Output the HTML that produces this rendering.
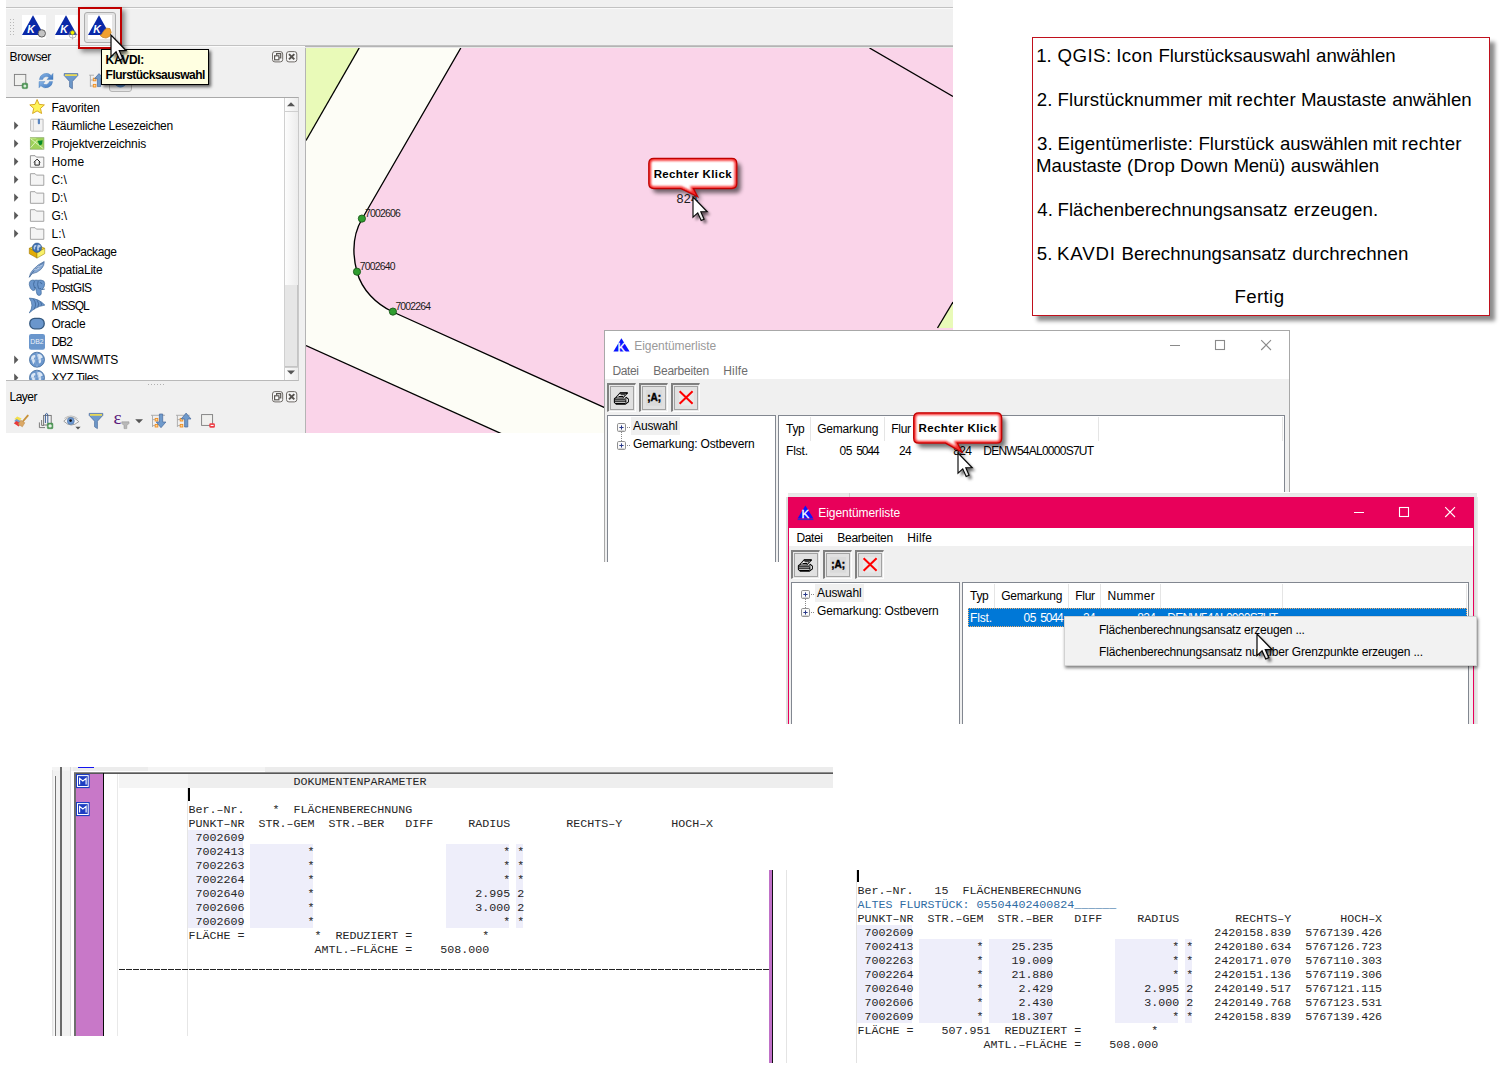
<!DOCTYPE html>
<html><head><meta charset="utf-8"><title>KAVDI</title><style>
html,body{margin:0;padding:0;background:#fff;}
body{width:1508px;height:1081px;position:relative;overflow:hidden;font-family:"Liberation Sans",sans-serif;}
.t{position:absolute;white-space:pre;display:block;}
.b{position:absolute;box-sizing:border-box;}
svg{position:absolute;overflow:visible;}
</style></head><body>
<svg style="left:0;top:0" width="0" height="0"><defs><filter id="blur09" x="-50%" y="-50%" width="200%" height="200%"><feGaussianBlur stdDeviation="0.9"/></filter><filter id="blur1" x="-50%" y="-50%" width="200%" height="200%"><feGaussianBlur stdDeviation="1.2"/></filter><filter id="blur2" x="-50%" y="-50%" width="200%" height="200%"><feGaussianBlur stdDeviation="2"/></filter><filter id="blur05" x="-50%" y="-50%" width="200%" height="200%"><feGaussianBlur stdDeviation="0.7"/></filter><filter id="blur3" x="-50%" y="-50%" width="200%" height="200%"><feGaussianBlur stdDeviation="3"/></filter><linearGradient id="cgrad" x1="0" y1="0" x2="1" y2="1"><stop offset="0" stop-color="#fff"/><stop offset="0.55" stop-color="#fff"/><stop offset="1" stop-color="#c8c8c8"/></linearGradient></defs></svg>
<div class="b" style="left:6px;top:0px;width:947px;height:433px;background:#f0f0f0;"></div>
<div class="b" style="left:6px;top:7px;width:947px;height:1px;background:#c2c2c2;"></div>
<div class="b" style="left:6px;top:8px;width:947px;height:1px;background:#fafafa;"></div>
<div class="b" style="left:6px;top:45px;width:947px;height:1px;background:#c2c2c2;"></div>
<div class="b" style="left:6px;top:46px;width:947px;height:1px;background:#fbfbfb;"></div>
<svg style="left:9px;top:18px" width="6" height="20"><rect x="1" y="1" width="1" height="1" fill="#b8b8b8"/><rect x="1" y="4" width="1" height="1" fill="#b8b8b8"/><rect x="1" y="7" width="1" height="1" fill="#b8b8b8"/><rect x="1" y="10" width="1" height="1" fill="#b8b8b8"/><rect x="1" y="13" width="1" height="1" fill="#b8b8b8"/><rect x="1" y="16" width="1" height="1" fill="#b8b8b8"/><rect x="4" y="1" width="1" height="1" fill="#b8b8b8"/><rect x="4" y="4" width="1" height="1" fill="#b8b8b8"/><rect x="4" y="7" width="1" height="1" fill="#b8b8b8"/><rect x="4" y="10" width="1" height="1" fill="#b8b8b8"/><rect x="4" y="13" width="1" height="1" fill="#b8b8b8"/><rect x="4" y="16" width="1" height="1" fill="#b8b8b8"/></svg>
<svg style="left:22px;top:15px" width="26" height="26" viewBox="0 0 26 26"><rect x="0" y="0" width="24" height="24" fill="#fff"/><polygon points="11,0.3 0,20 22,20" fill="#0a28a8"/><text x="5.2" y="17.8" font-family="Liberation Sans" font-weight="bold" font-style="italic" font-size="10.5" fill="#fff">K</text><circle cx="19.8" cy="18.4" r="3.7" fill="#c4c4c4" stroke="#555" stroke-width="0.9"/></svg>
<svg style="left:55px;top:15px" width="26" height="26" viewBox="0 0 26 26"><rect x="0" y="0" width="24" height="24" fill="#fff"/><polygon points="11,0.3 0,20 22,20" fill="#0a28a8"/><text x="5.2" y="17.8" font-family="Liberation Sans" font-weight="bold" font-style="italic" font-size="10.5" fill="#fff">K</text><circle cx="17.6" cy="19.5" r="3.6" fill="none" stroke="#8a8a9a" stroke-width="0.8" opacity="0.8"/><path d="M17.6 14.5V24.5M12.6 19.5H22.6" stroke="#8a8a9a" stroke-width="0.7" opacity="0.7"/><circle cx="17.5" cy="17.7" r="2" fill="#f4f400" stroke="#8a8a20" stroke-width="0.5"/></svg>
<div class="b" style="left:84px;top:12px;width:32px;height:31px;background:#e4e4e4;border:1px solid #adadad;border-radius:3px;"></div>
<svg style="left:88px;top:15px" width="26" height="26" viewBox="0 0 26 26"><rect x="0" y="0" width="24" height="24" fill="#fff"/><polygon points="11,0.3 0,20 22,20" fill="#0a28a8"/><text x="5.2" y="17.8" font-family="Liberation Sans" font-weight="bold" font-style="italic" font-size="10.5" fill="#fff">K</text><polygon points="13.5,19.5 16,15.5 18.5,13.2 22,13.6 23.2,17.5 21.5,21.5 18,23 14.5,22.3 12,20.3" fill="#f0a030" stroke="#c8862a" stroke-width="0.8"/></svg>
<span class="t" style="left:9.50px;top:48.80px;height:17px;line-height:17px;font-size:12px;letter-spacing:-0.359px;color:#000;">Browser</span>
<svg style="left:272px;top:51.2px" width="28" height="12"><rect x="0.5" y="0.6" width="10.2" height="10.3" rx="2.4" fill="#f6f6f6" stroke="#6e6a66"/><rect x="2.6" y="4.8" width="4.3" height="4" fill="#fff" stroke="#5e5a56" stroke-width="1.2"/><path d="M4.6 4.6V2.7H8.7V6.8H7.2" fill="none" stroke="#5e5a56" stroke-width="1.2"/><rect x="14.5" y="0.6" width="10.3" height="10.3" rx="2.4" fill="#f6f6f6" stroke="#6e6a66"/><path d="M17 3.1L22.3 8.4M22.3 3.1L17 8.4" stroke="#55524e" stroke-width="2"/></svg>
<svg style="left:6px;top:66px" width="130" height="30" viewBox="6 66 130 30"><rect x="14.4" y="74.4" width="11.4" height="11.2" fill="#f0f0ee" stroke="#7c7c7c" stroke-width="0.9"/><rect x="22.2" y="83.2" width="5.4" height="5.4" rx="1" fill="#4e9656" stroke="#3f8647" stroke-width="0.6"/><circle cx="24.9" cy="85.9" r="1.5" fill="#d9ecd9"/><defs><linearGradient id="rg" x1="0" y1="0" x2="1" y2="1"><stop offset="0" stop-color="#8db8e8"/><stop offset="1" stop-color="#3b74bd"/></linearGradient></defs><path d="M39.4 79.6A6.9 6.9 0 0 1 51.2 75.4L53 73.4V79.6H46.9L49 77.6A3.9 3.9 0 0 0 42.6 79.6Z" fill="url(#rg)" stroke="#3f78b8" stroke-width="0.4"/><path d="M52.6 81.6A6.9 6.9 0 0 1 40.8 85.8L39 87.8V81.6H45.1L43 83.6A3.9 3.9 0 0 0 49.4 81.6Z" fill="url(#rg)" stroke="#3f78b8" stroke-width="0.4"/><path d="M64.2 73.6H77.8V75.6L72.4 81.4V88.8L69.6 87V81.4L64.2 75.6Z" fill="#6f9acb" stroke="#47699b" stroke-width="0.7" stroke-linejoin="round"/><rect x="65" y="74.3" width="12" height="1.6" fill="#f7e04a"/><path d="M89.2 75.2H94M90.4 75.2V86.8M90.4 80H93M90.4 86H93" stroke="#a8a8a8" stroke-width="0.9" fill="none"/><rect x="93.3" y="78.2" width="2.6" height="2.6" fill="#fbd9a0" stroke="#f08c1e" stroke-width="0.9"/><rect x="93.3" y="84.4" width="2.6" height="2.6" fill="#fbd9a0" stroke="#f08c1e" stroke-width="0.9"/><path d="M97.4 86.6V78.6H94.6L99 73.6L103.4 78.6H100.6V86.6Z" fill="#6f9acb" stroke="#47699b" stroke-width="0.7" stroke-linejoin="round"/><rect x="109.5" y="74.5" width="22" height="17" rx="2.5" fill="#e4e4e4" stroke="#b5b5b5"/><circle cx="120.5" cy="81" r="6.5" fill="#5b8fc8"/></svg>
<div class="b" style="left:6px;top:97px;width:293px;height:284px;background:#fff;border-top:1px solid #a9a9a9;border-right:1px solid #c9c9c9;border-bottom:1px solid #b9b9b9;"></div>
<div class="b" style="left:284px;top:98px;width:14px;height:282px;background:linear-gradient(90deg,#fefefe,#ececec);"></div>
<div class="b" style="left:284px;top:111px;width:14px;height:1px;background:#cfcfcf;"></div>
<div class="b" style="left:284px;top:366.5px;width:14px;height:1px;background:#cfcfcf;"></div>
<div class="b" style="left:284px;top:285px;width:14px;height:82px;background:#e6e6e6;border:1px solid #c4c4c4;border-top:none;"></div>
<svg style="left:284px;top:98px" width="14" height="282"><path d="M3 8.2L7 4.3L11 8.2Z" fill="#555"/><path d="M3 272.6L7 276.5L11 272.6Z" fill="#555"/><path d="M0.5 0V282" stroke="#d0d0d0" stroke-width="1"/></svg>
<svg style="left:6px;top:98px" width="278" height="282" viewBox="6 98 278 282"><defs><clipPath id="tc"><rect x="6" y="98" width="278" height="282"/></clipPath></defs><g clip-path="url(#tc)"><g transform="translate(29.6,99.89999999999999)"><path d="M7.5 -0.4L9.6 4.5L14.8 5L10.9 8.5L12 13.6L7.5 11L3 13.6L4.1 8.5L0.2 5L5.4 4.5Z" fill="#fff45a" stroke="#d4a017" stroke-width="0.9" stroke-linejoin="round"/></g><path d="M14.2 121.39999999999999L18.4 125.6L14.2 129.79999999999998Z" fill="#5a5a5a"/><g transform="translate(29.6,117.69999999999999)"><path d="M1 2.5Q1 1.5 2 1.5H13.5V13.5H2Q1 13.5 1 12.5Z" fill="#f2f2f2" stroke="#b4b4b4" stroke-width="0.9"/><path d="M3.8 1.5V13.5" stroke="#c8c8c8" stroke-width="0.8"/><rect x="8.2" y="1" width="2.2" height="5.5" rx="1" fill="#5b86c0"/></g><path d="M14.2 139.4L18.4 143.6L14.2 147.79999999999998Z" fill="#5a5a5a"/><g transform="translate(29.6,135.7)"><rect x="0.7" y="2" width="13.6" height="11.5" fill="#9ed25a" stroke="#8aa868" stroke-width="0.7"/><path d="M0.7 2H6L7.5 3.6H0.7Z" fill="#b9e07e"/><path d="M1 3L13.8 13M1 12L8 4" stroke="#e6f5c8" stroke-width="0.9"/><path d="M8 5.2L13 4.6L12.5 8.6L10 9.8Z" fill="#0a8a2a"/></g><path d="M14.2 157.4L18.4 161.6L14.2 165.79999999999998Z" fill="#5a5a5a"/><g transform="translate(29.6,153.7)"><path d="M0.8 2H5.5L6.8 3.4H14.2V13.6H0.8Z" fill="#f7f7f7" stroke="#8a8a8a" stroke-width="0.9"/><path d="M4.3 8.6L7.5 5.4L10.7 8.6M5.3 8V11.4H9.7V8" fill="none" stroke="#222" stroke-width="1"/></g><path d="M14.2 175.4L18.4 179.6L14.2 183.79999999999998Z" fill="#5a5a5a"/><g transform="translate(29.6,171.7)"><path d="M0.8 2H5.5L6.8 3.4H14.2V13.6H0.8Z" fill="#f4f4f4" stroke="#9a9a9a" stroke-width="0.9"/></g><path d="M14.2 193.4L18.4 197.6L14.2 201.79999999999998Z" fill="#5a5a5a"/><g transform="translate(29.6,189.7)"><path d="M0.8 2H5.5L6.8 3.4H14.2V13.6H0.8Z" fill="#f4f4f4" stroke="#9a9a9a" stroke-width="0.9"/></g><path d="M14.2 211.4L18.4 215.6L14.2 219.79999999999998Z" fill="#5a5a5a"/><g transform="translate(29.6,207.7)"><path d="M0.8 2H5.5L6.8 3.4H14.2V13.6H0.8Z" fill="#f4f4f4" stroke="#9a9a9a" stroke-width="0.9"/></g><path d="M14.2 229.4L18.4 233.6L14.2 237.79999999999998Z" fill="#5a5a5a"/><g transform="translate(29.6,225.7)"><path d="M0.8 2H5.5L6.8 3.4H14.2V13.6H0.8Z" fill="#f4f4f4" stroke="#9a9a9a" stroke-width="0.9"/></g><g transform="translate(29,243.7)"><polygon points="0.3,4.6 8,1.2 15.7,4.6 8,9" fill="#f3d53a" stroke="#a68200" stroke-width="0.6"/><polygon points="0.3,4.6 0.3,10 8,14.4 8,9" fill="#e2ab06" stroke="#a07800" stroke-width="0.6" stroke-linejoin="round"/><polygon points="15.7,4.6 15.7,10 8,14.4 8,9" fill="#f8f16a" stroke="#a68a10" stroke-width="0.6" stroke-linejoin="round"/><circle cx="8" cy="4" r="4.7" fill="#3f6fae" stroke="#2c558c" stroke-width="0.5"/><path d="M5 2.2Q6.2 0.6 7.6 1.6Q7.4 3.2 6.2 3.6Q6.6 5.2 5.2 6Q4 4.4 5 2.2ZM8.8 1Q10.8 0.6 11.8 2.4Q11.4 4 10.2 3.6Q9.2 4.8 10 6.4Q9 7.8 8.2 6.2Q7.6 3.6 8.8 1Z" fill="#c4d6ee" opacity="0.9"/></g><g transform="translate(29,261.7)"><path d="M0.3 15.6Q0.8 11.4 4 8Q9 2.4 15.2 -0.2Q15.6 4 12 7.6Q8 11.4 3.6 11.8Q1.6 13.6 0.3 15.6Z" fill="#86a8d4" stroke="#4a6f9e" stroke-width="0.7" stroke-linejoin="round"/><path d="M0.4 15.4Q4 8.6 14.6 0.6" stroke="#3d628f" stroke-width="0.7" fill="none"/><path d="M5 8.4L10.4 6.4M7.6 5.6L12.8 3.6" stroke="#dbe6f4" stroke-width="0.6"/></g><g transform="translate(29,279.7)"><path d="M1.6 1Q0 2.2 0.3 5Q0.8 9 3.4 10.6Q5 11.2 6 10L6.4 7.4Q7 9.6 7.4 12Q7.6 15.6 10 15.8Q12.6 15.6 12.3 13L12 10.2Q14 9.6 15.1 7Q16.2 3.6 15 1.5Q12 -0.3 9 0.6Q7.2 0.2 5.6 0.6Q3.6 0 1.6 1Z" fill="#6a96cc" stroke="#3f6a9c" stroke-width="0.7" stroke-linejoin="round"/><path d="M5.4 1.4Q3.6 4.4 5.6 8.4M9.2 1.2Q8 4.6 9.4 8.6Q10.8 9.6 12 8.8M10.8 3Q12.6 2.6 13 4.4" stroke="#3a6294" stroke-width="0.8" fill="none"/><path d="M13 9.8L15.8 9.4" stroke="#3f6a9c" stroke-width="0.9"/></g><g transform="translate(29,297.7)"><path d="M0.3 0.4Q9.6 0.6 15.8 7.4Q10 8.4 6.4 10.6Q3.2 12.6 0.3 15.2Q5.6 7.6 0.3 0.4Z" fill="#6a96cc" stroke="#3f6a9c" stroke-width="0.7" stroke-linejoin="round"/><path d="M4.4 1.4Q8.4 6.4 5 11.6M8.2 2.6Q11 6.4 8.8 9.4M11.6 4.4Q13 6.4 12.2 8" stroke="#3a6294" stroke-width="0.8" fill="none"/></g><g transform="translate(29,315.7)"><rect x="0.8" y="2.7" width="14.4" height="10.4" rx="4.8" fill="#6a96cc" stroke="#34587f" stroke-width="1.3"/></g><g transform="translate(29,333.7)"><rect x="0" y="0.2" width="16" height="15.8" rx="2.2" fill="#6a96cc"/><text x="8" y="10.4" font-size="6.6" fill="#eef3fa" text-anchor="middle" textLength="13.4" lengthAdjust="spacingAndGlyphs" font-family="Liberation Sans">DB2</text></g><path d="M14.2 355.5L18.4 359.7L14.2 363.9Z" fill="#5a5a5a"/><g transform="translate(29,351.7)"><circle cx="8" cy="8" r="7.5" fill="#6a96cc" stroke="#3f6a9c" stroke-width="0.8"/><path d="M2.2 5.2Q3.6 3 5.8 3.4Q7 4.4 6 5.6Q4.8 6 5 7.4Q6.4 8.2 5.8 10Q5 11.8 4.2 12.6Q3.6 10.6 3 9Q1.6 7.4 2.2 5.2ZM8.4 2.6Q10.6 1.8 12.4 3.2Q13.8 4.6 13.6 6.4Q12.4 6 11.6 7Q12.6 8.4 12 10.4Q11 12.4 10 11.4Q9.4 9.6 9.8 8.2Q8.4 7.4 8.8 5.8Q7.8 4.2 8.4 2.6Z" fill="#dbe7f5"/><path d="M1 8H15M8 0.8Q4.6 8 8 15.2M8 0.8Q11.4 8 8 15.2" stroke="#9fbade" stroke-width="0.4" fill="none"/></g><path d="M14.2 373.5L18.4 377.7L14.2 381.9Z" fill="#5a5a5a"/><g transform="translate(29,369.7)"><circle cx="8" cy="8" r="7.5" fill="#6a96cc" stroke="#3f6a9c" stroke-width="0.8"/><path d="M2.2 5.2Q3.6 3 5.8 3.4Q7 4.4 6 5.6Q4.8 6 5 7.4Q6.4 8.2 5.8 10Q5 11.8 4.2 12.6Q3.6 10.6 3 9Q1.6 7.4 2.2 5.2ZM8.4 2.6Q10.6 1.8 12.4 3.2Q13.8 4.6 13.6 6.4Q12.4 6 11.6 7Q12.6 8.4 12 10.4Q11 12.4 10 11.4Q9.4 9.6 9.8 8.2Q8.4 7.4 8.8 5.8Q7.8 4.2 8.4 2.6Z" fill="#dbe7f5"/><path d="M1 8H15M8 0.8Q4.6 8 8 15.2M8 0.8Q11.4 8 8 15.2" stroke="#9fbade" stroke-width="0.4" fill="none"/></g></g></svg>
<div class="b" style="left:6px;top:98px;width:278px;height:282px;overflow:hidden">
<span class="t" style="left:45.40px;top:2.20px;height:17px;line-height:17px;font-size:12px;letter-spacing:-0.191px;color:#000;">Favoriten</span>
<span class="t" style="left:45.40px;top:20.00px;height:17px;line-height:17px;font-size:12px;letter-spacing:-0.286px;color:#000;">Räumliche Lesezeichen</span>
<span class="t" style="left:45.40px;top:38.00px;height:17px;line-height:17px;font-size:12px;letter-spacing:-0.154px;color:#000;">Projektverzeichnis</span>
<span class="t" style="left:45.40px;top:56.00px;height:17px;line-height:17px;font-size:12px;letter-spacing:0.222px;color:#000;">Home</span>
<span class="t" style="left:45.40px;top:74.00px;height:17px;line-height:17px;font-size:12px;letter-spacing:0.055px;color:#000;">C:\</span>
<span class="t" style="left:45.40px;top:92.00px;height:17px;line-height:17px;font-size:12px;letter-spacing:0.055px;color:#000;">D:\</span>
<span class="t" style="left:45.40px;top:110.00px;height:17px;line-height:17px;font-size:12px;letter-spacing:-0.167px;color:#000;">G:\</span>
<span class="t" style="left:45.40px;top:128.00px;height:17px;line-height:17px;font-size:12px;letter-spacing:0.219px;color:#000;">L:\</span>
<span class="t" style="left:45.40px;top:146.10px;height:17px;line-height:17px;font-size:12px;letter-spacing:-0.438px;color:#000;">GeoPackage</span>
<span class="t" style="left:45.40px;top:164.10px;height:17px;line-height:17px;font-size:12px;letter-spacing:-0.237px;color:#000;">SpatiaLite</span>
<span class="t" style="left:45.40px;top:182.10px;height:17px;line-height:17px;font-size:12px;letter-spacing:-0.669px;color:#000;">PostGIS</span>
<span class="t" style="left:45.40px;top:200.10px;height:17px;line-height:17px;font-size:12px;letter-spacing:-0.903px;color:#000;">MSSQL</span>
<span class="t" style="left:45.40px;top:218.10px;height:17px;line-height:17px;font-size:12px;letter-spacing:-0.224px;color:#000;">Oracle</span>
<span class="t" style="left:45.40px;top:236.10px;height:17px;line-height:17px;font-size:12px;letter-spacing:-0.948px;color:#000;">DB2</span>
<span class="t" style="left:45.40px;top:254.10px;height:17px;line-height:17px;font-size:12px;letter-spacing:-0.352px;color:#000;">WMS/WMTS</span>
<span class="t" style="left:45.40px;top:272.10px;height:17px;line-height:17px;font-size:12px;letter-spacing:-0.483px;color:#000;">XYZ Tiles</span>
</div>
<svg style="left:148px;top:383px" width="20" height="3"><rect x="0" y="1" width="1" height="1" fill="#b0b0b0"/><rect x="3" y="1" width="1" height="1" fill="#b0b0b0"/><rect x="6" y="1" width="1" height="1" fill="#b0b0b0"/><rect x="9" y="1" width="1" height="1" fill="#b0b0b0"/><rect x="12" y="1" width="1" height="1" fill="#b0b0b0"/><rect x="15" y="1" width="1" height="1" fill="#b0b0b0"/></svg>
<span class="t" style="left:9.50px;top:389.30px;height:17px;line-height:17px;font-size:12px;letter-spacing:-0.504px;color:#000;">Layer</span>
<svg style="left:272px;top:391.4px" width="28" height="12"><rect x="0.5" y="0.6" width="10.2" height="10.3" rx="2.4" fill="#f6f6f6" stroke="#6e6a66"/><rect x="2.6" y="4.8" width="4.3" height="4" fill="#fff" stroke="#5e5a56" stroke-width="1.2"/><path d="M4.6 4.6V2.7H8.7V6.8H7.2" fill="none" stroke="#5e5a56" stroke-width="1.2"/><rect x="14.5" y="0.6" width="10.3" height="10.3" rx="2.4" fill="#f6f6f6" stroke="#6e6a66"/><path d="M17 3.1L22.3 8.4M22.3 3.1L17 8.4" stroke="#55524e" stroke-width="2"/></svg>
<svg style="left:6px;top:406px" width="220" height="27" viewBox="6 406 220 27"><polygon points="14.4,419 17.2,416.4 21.6,418.6 18.6,421.4" fill="#f5e04a"/><polygon points="14.2,421 16.6,419 21,421.2 18.4,423.4" fill="#6f9ad2"/><polygon points="13.8,423.2 16.4,421 21,423.4 18.6,426.4" fill="#ea3a3a"/><path d="M27.8 415.6L23.2 421" stroke="#c8923a" stroke-width="1.9" stroke-linecap="round"/><polygon points="20.8,420.2 24.8,422.8 22.4,426.8 18.2,424.2" fill="#dba866" stroke="#b98440" stroke-width="0.5"/><path d="M39.4 422.4V427.6H45M41.6 420V425.4H44" fill="none" stroke="#6e6e6e" stroke-width="0.9"/><rect x="43.6" y="415.4" width="7.6" height="9.6" fill="#f2f2f2" stroke="#6e6e6e" stroke-width="0.9"/><path d="M45.4 423V415.6Q45.4 413.4 46.6 413.4Q47.8 413.4 47.8 415.6V423.2" fill="none" stroke="#3b5f98" stroke-width="1"/><rect x="47.3" y="423.1" width="5.6" height="5.6" rx="0.9" fill="#4e9656" stroke="#3f8647" stroke-width="0.5"/><circle cx="50.1" cy="425.9" r="1.7" fill="#e4f2e4"/><path d="M63.8 421.2Q70.6 413 78.8 421.6Q71 428.6 63.8 421.2Z" fill="#f6f6f6" stroke="#8a8a8a" stroke-width="0.8"/><path d="M64.4 418.4Q71 413.4 77.6 418.6" fill="none" stroke="#9a9a9a" stroke-width="0.6"/><circle cx="70.8" cy="421" r="3.5" fill="#6f9ad2" stroke="#4a72a8" stroke-width="0.6"/><circle cx="70.6" cy="420.6" r="1.3" fill="#111"/><path d="M75.4 426.8H80.6L78 429.4Z" fill="#555"/><path d="M89.2 413.4H102.8V415.4L97.4 421.2V428.6L94.6 426.8V421.2L89.2 415.4Z" fill="#6f9acb" stroke="#47699b" stroke-width="0.7" stroke-linejoin="round"/><rect x="90" y="414.1" width="12" height="1.6" fill="#f7e04a"/><text x="113.6" y="424.2" font-size="19" font-family="Liberation Serif" fill="#5a1a7a">ε</text><path d="M121.8 421.8H129V423.4L126.8 425.6V428.6H124V425.6L121.8 423.4Z" fill="#b8b8b8" stroke="#8e8e8e" stroke-width="0.5"/><path d="M135.2 419.2H143L139.1 423.2Z" fill="#555"/><path d="M151 415.3H165M152.5 415.3V427M152.5 419.6H155M152.5 425.6H155" stroke="#a8a8a8" stroke-width="0.9" fill="none"/><rect x="155.2" y="418.4" width="2.6" height="2.6" fill="#fbd9a0" stroke="#f08c1e" stroke-width="0.9"/><rect x="155.2" y="424.4" width="2.6" height="2.6" fill="#fbd9a0" stroke="#f08c1e" stroke-width="0.9"/><path d="M159.4 414V422H156.2L161 427.7L165.9 422H162.7V414Z" fill="#6f9acb" stroke="#47699b" stroke-width="0.7" stroke-linejoin="round"/><path d="M176 415.3H189.7M177.4 415.3V427M177.4 419.6H180M177.4 425.6H180" stroke="#a8a8a8" stroke-width="0.9" fill="none"/><rect x="180.2" y="418.4" width="2.6" height="2.6" fill="#fbd9a0" stroke="#f08c1e" stroke-width="0.9"/><rect x="180.2" y="424.4" width="2.6" height="2.6" fill="#fbd9a0" stroke="#f08c1e" stroke-width="0.9"/><path d="M184.6 427V419H181.2L186.1 413.1L191 419H187.8V427Z" fill="#6f9acb" stroke="#47699b" stroke-width="0.7" stroke-linejoin="round"/><rect x="201.6" y="414.6" width="11" height="10.8" fill="#f0f0ee" stroke="#7c7c7c" stroke-width="0.9"/><rect x="209.3" y="423.2" width="5.6" height="4.5" rx="1.3" fill="#ee3e46"/><path d="M210.6 425.45H213.6" stroke="#fff" stroke-width="1.1"/></svg>
<div class="b" style="left:305px;top:46px;width:1px;height:387px;background:#b4b4b4;"></div>
<div class="b" style="left:305px;top:46px;width:648px;height:1px;background:#b4b4b4;"></div>
<div class="b" style="left:305px;top:47px;width:648px;height:1px;background:#e8e8e8;"></div>
<svg style="left:306px;top:48px;overflow:hidden" width="647" height="385" viewBox="306 48 647 385"><rect x="306" y="48" width="647" height="385" fill="#fad4e9"/><path d="M306,48 H460.8 L362,219 C352,236 352.5,255 357,272 C362,290 376,304 393,312 L953,565 V640 L306,345.5 Z" fill="#fdfdf6"/><polygon points="306,48 359.2,48 306,140.5" fill="#e9fab8"/><polygon points="953,302 937.5,328 953,328" fill="#e9fab8"/><path d="M359.2,48 L306,140.5" fill="none" stroke="#000" stroke-width="1.35"/><path d="M460.8,48 L362,219 C352,236 352.5,255 357,272 C362,290 376,304 393,312 L953,565" fill="none" stroke="#000" stroke-width="1.35"/><path d="M306,345.5 L953,637.5" fill="none" stroke="#000" stroke-width="1.35"/><path d="M869.5,48 L953,96.5" fill="none" stroke="#000" stroke-width="1.35"/><path d="M937.5,328 L953,302" fill="none" stroke="#000" stroke-width="1.35"/><circle cx="361.9" cy="218.6" r="3.6" fill="#2f9e2f" stroke="#1d5a1d" stroke-width="0.9"/><circle cx="357" cy="271.7" r="3.6" fill="#2f9e2f" stroke="#1d5a1d" stroke-width="0.9"/><circle cx="392.9" cy="311.6" r="3.6" fill="#2f9e2f" stroke="#1d5a1d" stroke-width="0.9"/></svg>
<span class="t" style="left:365.00px;top:206.00px;height:15px;line-height:15px;font-size:10.4px;letter-spacing:-0.798px;color:#1a1a1a;">7002606</span>
<span class="t" style="left:359.80px;top:259.10px;height:15px;line-height:15px;font-size:10.4px;letter-spacing:-0.798px;color:#1a1a1a;">7002640</span>
<span class="t" style="left:395.40px;top:299.10px;height:15px;line-height:15px;font-size:10.4px;letter-spacing:-0.798px;color:#1a1a1a;">7002264</span>
<span class="t" style="left:676.60px;top:190.40px;height:18px;line-height:18px;font-size:12.6px;letter-spacing:0.159px;color:#1c1c1c;">824</span>
<div class="b" style="left:1032px;top:37px;width:458px;height:279px;background:#fff;border:1.3px solid #c0101c;box-shadow:5px 5px 4px rgba(0,0,0,0.45);"></div>
<span class="t" style="left:1036.20px;top:44.70px;height:22px;line-height:22px;font-size:18.67px;letter-spacing:0.016px;color:#000;">1.</span>
<span class="t" style="left:1057.56px;top:44.70px;height:22px;line-height:22px;font-size:18.67px;letter-spacing:0.444px;color:#000;">QGIS:</span>
<span class="t" style="left:1116.22px;top:44.70px;height:22px;line-height:22px;font-size:18.67px;letter-spacing:0.354px;color:#000;">Icon</span>
<span class="t" style="left:1158.51px;top:44.70px;height:22px;line-height:22px;font-size:18.67px;letter-spacing:-0.111px;color:#000;">Flurstücksauswahl</span>
<span class="t" style="left:1316.05px;top:44.70px;height:22px;line-height:22px;font-size:18.67px;letter-spacing:-0.043px;color:#000;">anwählen</span>
<span class="t" style="left:1036.67px;top:88.90px;height:22px;line-height:22px;font-size:18.67px;letter-spacing:0.241px;color:#000;">2.</span>
<span class="t" style="left:1057.51px;top:88.90px;height:22px;line-height:22px;font-size:18.67px;letter-spacing:0.046px;color:#000;">Flurstücknummer</span>
<span class="t" style="left:1207.89px;top:88.90px;height:22px;line-height:22px;font-size:18.67px;letter-spacing:-0.490px;color:#000;">mit</span>
<span class="t" style="left:1236.19px;top:88.90px;height:22px;line-height:22px;font-size:18.67px;letter-spacing:0.224px;color:#000;">rechter</span>
<span class="t" style="left:1300.91px;top:88.90px;height:22px;line-height:22px;font-size:18.67px;letter-spacing:-0.075px;color:#000;">Maustaste</span>
<span class="t" style="left:1392.25px;top:88.90px;height:22px;line-height:22px;font-size:18.67px;letter-spacing:-0.081px;color:#000;">anwählen</span>
<span class="t" style="left:1036.95px;top:132.80px;height:22px;line-height:22px;font-size:18.67px;letter-spacing:0.241px;color:#000;">3.</span>
<span class="t" style="left:1057.51px;top:132.80px;height:22px;line-height:22px;font-size:18.67px;letter-spacing:0.111px;color:#000;">Eigentümerliste:</span>
<span class="t" style="left:1198.41px;top:132.80px;height:22px;line-height:22px;font-size:18.67px;letter-spacing:-0.002px;color:#000;">Flurstück</span>
<span class="t" style="left:1280.05px;top:132.80px;height:22px;line-height:22px;font-size:18.67px;letter-spacing:-0.153px;color:#000;">auswählen</span>
<span class="t" style="left:1372.59px;top:132.80px;height:22px;line-height:22px;font-size:18.67px;letter-spacing:-0.296px;color:#000;">mit</span>
<span class="t" style="left:1401.59px;top:132.80px;height:22px;line-height:22px;font-size:18.67px;letter-spacing:0.321px;color:#000;">rechter</span>
<span class="t" style="left:1036.11px;top:154.60px;height:22px;line-height:22px;font-size:18.67px;letter-spacing:-0.075px;color:#000;">Maustaste</span>
<span class="t" style="left:1127.08px;top:154.60px;height:22px;line-height:22px;font-size:18.67px;letter-spacing:0.275px;color:#000;">(Drop</span>
<span class="t" style="left:1180.11px;top:154.60px;height:22px;line-height:22px;font-size:18.67px;letter-spacing:0.108px;color:#000;">Down</span>
<span class="t" style="left:1233.51px;top:154.60px;height:22px;line-height:22px;font-size:18.67px;letter-spacing:-0.311px;color:#000;">Menü)</span>
<span class="t" style="left:1290.65px;top:154.60px;height:22px;line-height:22px;font-size:18.67px;letter-spacing:-0.098px;color:#000;">auswählen</span>
<span class="t" style="left:1037.23px;top:198.90px;height:22px;line-height:22px;font-size:18.67px;letter-spacing:0.241px;color:#000;">4.</span>
<span class="t" style="left:1057.51px;top:198.90px;height:22px;line-height:22px;font-size:18.67px;letter-spacing:0.038px;color:#000;">Flächenberechnungsansatz</span>
<span class="t" style="left:1293.75px;top:198.90px;height:22px;line-height:22px;font-size:18.67px;letter-spacing:0.194px;color:#000;">erzeugen.</span>
<span class="t" style="left:1036.85px;top:242.60px;height:22px;line-height:22px;font-size:18.67px;letter-spacing:0.016px;color:#000;">5.</span>
<span class="t" style="left:1056.91px;top:242.60px;height:22px;line-height:22px;font-size:18.67px;letter-spacing:0.871px;color:#000;">KAVDI</span>
<span class="t" style="left:1121.51px;top:242.60px;height:22px;line-height:22px;font-size:18.67px;letter-spacing:-0.013px;color:#000;">Berechnungsansatz</span>
<span class="t" style="left:1292.25px;top:242.60px;height:22px;line-height:22px;font-size:18.67px;letter-spacing:0.184px;color:#000;">durchrechnen</span>
<span class="t" style="left:1234.41px;top:286.40px;height:22px;line-height:22px;font-size:18.67px;letter-spacing:0.385px;color:#000;">Fertig</span>
<div class="b" style="left:604px;top:330px;width:686px;height:232px;overflow:hidden;background:#fff;">
<div class="b" style="left:0px;top:0px;width:686px;height:232px;border:1px solid #a8a8a8;border-bottom:none;"></div>
<svg style="left:9px;top:8px" width="18" height="16" viewBox="0 0 18 16"><polygon points="8.4,0.2 0.4,13.6 16.6,13.6" fill="#0a14ff"/><text x="4.5" y="13.5" font-family="Liberation Sans" font-size="12" fill="#fff" stroke="#fff" stroke-width="0.3">K</text></svg>
<span class="t" style="left:30.30px;top:7.70px;height:17px;line-height:17px;font-size:12px;letter-spacing:-0.061px;color:#9a9a9a;">Eigentümerliste</span>
<svg style="left:560px;top:5px" width="115" height="22"><path d="M6 10.5H16" stroke="#8a8a8a" stroke-width="1"/><rect x="51.5" y="5.5" width="9" height="9" fill="none" stroke="#8a8a8a" stroke-width="1.1"/><path d="M97.2 5.2L107 15M107 5.2L97.2 15" stroke="#8a8a8a" stroke-width="1.1"/></svg>
<span class="t" style="left:8.40px;top:32.70px;height:17px;line-height:17px;font-size:12px;letter-spacing:-0.363px;color:#6d6d6d;">Datei</span>
<span class="t" style="left:49.20px;top:32.70px;height:17px;line-height:17px;font-size:12px;letter-spacing:-0.235px;color:#6d6d6d;">Bearbeiten</span>
<span class="t" style="left:119.20px;top:32.70px;height:17px;line-height:17px;font-size:12px;letter-spacing:0.199px;color:#6d6d6d;">Hilfe</span>
<div class="b" style="left:1px;top:49px;width:684px;height:232px;background:#f0f0f0;"></div>
<div class="b" style="left:3px;top:52.9px;width:28.8px;height:28.8px;background:#e9e9e9;border-top:2px solid #808080;border-left:2px solid #808080;border-right:1.5px solid #fdfdfd;border-bottom:1.5px solid #fdfdfd;"></div><div class="b" style="left:5.9px;top:56.1px;width:24.3px;height:23.8px;background:#e1e1e1;border:1px solid #a2a2a2;"></div><svg style="left:3px;top:52.9px" width="29" height="29" viewBox="0 0 29 29"><g transform="translate(0.36,1.66) scale(0.947,0.893)"><polygon points="13.4,9.3 21.3,9.3 16.2,14.9 8.5,14.9" fill="#fff" stroke="#000" stroke-width="1.1" stroke-linejoin="round"/><path d="M13.2 9.3H21.4" stroke="#000" stroke-width="1.5"/><path d="M13.8 11.4H18.6M11.8 13.2H16.6" stroke="#000" stroke-width="1.1"/><path d="M8.5 14.9L7.4 16V19.8L9.6 22H18.8L22.2 19.4V16.2L20 14.2L19 15.4" fill="#fff" stroke="#000" stroke-width="1.1" stroke-linejoin="round"/><path d="M7.6 16.1H19M7.6 18.5H19.8M9 20.9H19" stroke="#000" stroke-width="1.35"/><path d="M19.6 15.6V21.2" stroke="#000" stroke-width="1"/></g></svg>
<div class="b" style="left:35.2px;top:52.9px;width:28.8px;height:28.8px;background:#e9e9e9;border-top:2px solid #808080;border-left:2px solid #808080;border-right:1.5px solid #fdfdfd;border-bottom:1.5px solid #fdfdfd;"></div><div class="b" style="left:38.1px;top:56.1px;width:24.3px;height:23.8px;background:#e1e1e1;border:1px solid #a2a2a2;"></div><svg style="left:35.2px;top:52.9px" width="29" height="29" viewBox="0 0 29 29"><rect x="7" y="7" width="16.2" height="15.6" fill="#dadada"/><text x="15.1" y="18.3" text-anchor="middle" font-family="Liberation Sans" font-weight="bold" font-size="10" fill="#000" stroke="#000" stroke-width="0.45">;A;</text></svg>
<div class="b" style="left:67.1px;top:52.9px;width:28.8px;height:28.8px;background:#e9e9e9;border-top:2px solid #808080;border-left:2px solid #808080;border-right:1.5px solid #fdfdfd;border-bottom:1.5px solid #fdfdfd;"></div><div class="b" style="left:70.0px;top:56.1px;width:24.3px;height:23.8px;background:#e1e1e1;border:1px solid #a2a2a2;"></div><svg style="left:67.1px;top:52.9px" width="29" height="29" viewBox="0 0 29 29"><rect x="8" y="7" width="15" height="15.5" fill="#e8e8e8"/><path d="M8.6 8.2L21.6 20.8M21.6 8.2L8.6 20.8" stroke="#ff0000" stroke-width="2"/></svg>
<div class="b" style="left:3px;top:85px;width:169px;height:232px;background:#fff;border:1px solid #828790;"></div>
<div class="b" style="left:174px;top:85px;width:507px;height:232px;background:#fff;border:1px solid #828790;"></div>
<div class="b" style="left:27.2px;top:87.4px;width:48.6px;height:17.6px;background:#f0f0f0;"></div>
<svg style="left:17.2px;top:102.4px" width="2" height="9"><path d="M0.5 0V9" stroke="#888" stroke-width="1" stroke-dasharray="1,1"/></svg>
<svg style="left:13.1px;top:93.0px" width="16" height="9" viewBox="0 0 16 9"><rect x="0.5" y="0.5" width="8" height="8" rx="1.2" fill="#fafafa" stroke="#909090"/><path d="M1.4 7.6H7.6" stroke="#d0d0d0" stroke-width="1"/><path d="M2.4 4.5H6.6M4.5 2.4V6.6" stroke="#2a3a8a" stroke-width="1"/><path d="M10 4.5H11M12 4.5H13" stroke="#888" stroke-width="1"/></svg>
<svg style="left:13.1px;top:111.1px" width="16" height="9" viewBox="0 0 16 9"><rect x="0.5" y="0.5" width="8" height="8" rx="1.2" fill="#fafafa" stroke="#909090"/><path d="M1.4 7.6H7.6" stroke="#d0d0d0" stroke-width="1"/><path d="M2.4 4.5H6.6M4.5 2.4V6.6" stroke="#2a3a8a" stroke-width="1"/><path d="M10 4.5H11M12 4.5H13" stroke="#888" stroke-width="1"/></svg>
<span class="t" style="left:29.00px;top:87.50px;height:17px;line-height:17px;font-size:12px;letter-spacing:-0.123px;color:#000;">Auswahl</span>
<span class="t" style="left:29.00px;top:105.50px;height:17px;line-height:17px;font-size:12px;letter-spacing:-0.161px;color:#000;">Gemarkung: Ostbevern</span>
<div class="b" style="left:206.4px;top:87px;width:1px;height:24px;background:#e5e5e5;"></div>
<div class="b" style="left:280.3px;top:87px;width:1px;height:24px;background:#e5e5e5;"></div>
<div class="b" style="left:312.4px;top:87px;width:1px;height:24px;background:#e5e5e5;"></div>
<div class="b" style="left:372.1px;top:87px;width:1px;height:24px;background:#e5e5e5;"></div>
<div class="b" style="left:493.9px;top:87px;width:1px;height:24px;background:#e5e5e5;"></div>
<div class="b" style="left:678.2px;top:87px;width:1px;height:24px;background:#e5e5e5;"></div>
<span class="t" style="left:182.00px;top:91.10px;height:17px;line-height:17px;font-size:12px;letter-spacing:-0.281px;color:#000;">Typ</span>
<span class="t" style="left:213.20px;top:91.10px;height:17px;line-height:17px;font-size:12px;letter-spacing:-0.189px;color:#000;">Gemarkung</span>
<span class="t" style="left:287.30px;top:91.10px;height:17px;line-height:17px;font-size:12px;letter-spacing:-0.292px;color:#000;">Flur</span>
<span class="t" style="left:319.50px;top:91.10px;height:17px;line-height:17px;font-size:12px;letter-spacing:0.249px;color:#000;">Nummer</span>
<span class="t" style="left:182.00px;top:112.70px;height:17px;line-height:17px;font-size:12px;letter-spacing:-0.133px;color:#000;">Flst.</span>
<span class="t" style="left:235.60px;top:112.70px;height:17px;line-height:17px;font-size:12px;letter-spacing:-0.474px;color:#000;">05</span>
<span class="t" style="left:252.20px;top:112.70px;height:17px;line-height:17px;font-size:12px;letter-spacing:-1.074px;color:#000;">5044</span>
<span class="t" style="left:295.00px;top:112.70px;height:17px;line-height:17px;font-size:12px;letter-spacing:-0.574px;color:#000;">24</span>
<span class="t" style="left:349.30px;top:112.70px;height:17px;line-height:17px;font-size:12px;letter-spacing:-0.741px;color:#000;">824</span>
<span class="t" style="left:379.30px;top:112.70px;height:17px;line-height:17px;font-size:12px;letter-spacing:-0.754px;color:#000;">DENW54AL0000S7UT</span>
</div>
<div class="b" style="left:786px;top:497px;width:2px;height:227px;background:#dedede;"></div>
<div class="b" style="left:788px;top:492px;width:689px;height:5.2px;background:#fff;"></div>
<div class="b" style="left:788px;top:492.6px;width:689px;height:1px;background:#e6e6e6;"></div>
<div class="b" style="left:788px;top:494px;width:689px;height:3.2px;background:#e9e9e9;"></div>
<div class="b" style="left:849px;top:493px;width:1px;height:4px;background:#cfcfcf;"></div>
<div class="b" style="left:1474px;top:497px;width:3.5px;height:227px;background:linear-gradient(90deg,#d9d9d9,#efefef);"></div>
<div class="b" style="left:788px;top:497px;width:686px;height:227px;overflow:hidden;background:#fff;">
<div class="b" style="left:0px;top:0px;width:686px;height:31px;background:#e8005a;"></div>
<div class="b" style="left:0px;top:0px;width:1px;height:227px;background:#e8005a;"></div>
<div class="b" style="left:685px;top:0px;width:1px;height:227px;background:#e8005a;"></div>
<svg style="left:9px;top:8px" width="18" height="16" viewBox="0 0 18 16"><polygon points="8.4,0.4 0.6,13.6 16.4,13.6" fill="#0a14ff"/><path d="M0.6 14.6H16.4" stroke="#2a2ad0" stroke-width="1"/><text x="4.4" y="13.4" font-family="Liberation Sans" font-size="11.5" fill="#fff" stroke="#fff" stroke-width="0.3">K</text></svg>
<span class="t" style="left:30.30px;top:8.40px;height:17px;line-height:17px;font-size:12px;letter-spacing:-0.061px;color:#fff;">Eigentümerliste</span>
<svg style="left:560px;top:5px" width="115" height="22"><path d="M6 10.5H16" stroke="#fff" stroke-width="1"/><rect x="51.5" y="5.5" width="9" height="9" fill="none" stroke="#fff" stroke-width="1.1"/><path d="M97.2 5.2L107 15M107 5.2L97.2 15" stroke="#fff" stroke-width="1.1"/></svg>
<span class="t" style="left:8.40px;top:33.20px;height:17px;line-height:17px;font-size:12px;letter-spacing:-0.363px;color:#000;">Datei</span>
<span class="t" style="left:49.20px;top:33.20px;height:17px;line-height:17px;font-size:12px;letter-spacing:-0.235px;color:#000;">Bearbeiten</span>
<span class="t" style="left:119.20px;top:33.20px;height:17px;line-height:17px;font-size:12px;letter-spacing:0.199px;color:#000;">Hilfe</span>
<div class="b" style="left:1px;top:49px;width:684px;height:227px;background:#f0f0f0;"></div>
<div class="b" style="left:3px;top:52.9px;width:28.8px;height:28.8px;background:#e9e9e9;border-top:2px solid #808080;border-left:2px solid #808080;border-right:1.5px solid #fdfdfd;border-bottom:1.5px solid #fdfdfd;"></div><div class="b" style="left:5.9px;top:56.1px;width:24.3px;height:23.8px;background:#e1e1e1;border:1px solid #a2a2a2;"></div><svg style="left:3px;top:52.9px" width="29" height="29" viewBox="0 0 29 29"><g transform="translate(0.36,1.66) scale(0.947,0.893)"><polygon points="13.4,9.3 21.3,9.3 16.2,14.9 8.5,14.9" fill="#fff" stroke="#000" stroke-width="1.1" stroke-linejoin="round"/><path d="M13.2 9.3H21.4" stroke="#000" stroke-width="1.5"/><path d="M13.8 11.4H18.6M11.8 13.2H16.6" stroke="#000" stroke-width="1.1"/><path d="M8.5 14.9L7.4 16V19.8L9.6 22H18.8L22.2 19.4V16.2L20 14.2L19 15.4" fill="#fff" stroke="#000" stroke-width="1.1" stroke-linejoin="round"/><path d="M7.6 16.1H19M7.6 18.5H19.8M9 20.9H19" stroke="#000" stroke-width="1.35"/><path d="M19.6 15.6V21.2" stroke="#000" stroke-width="1"/></g></svg>
<div class="b" style="left:35.2px;top:52.9px;width:28.8px;height:28.8px;background:#e9e9e9;border-top:2px solid #808080;border-left:2px solid #808080;border-right:1.5px solid #fdfdfd;border-bottom:1.5px solid #fdfdfd;"></div><div class="b" style="left:38.1px;top:56.1px;width:24.3px;height:23.8px;background:#e1e1e1;border:1px solid #a2a2a2;"></div><svg style="left:35.2px;top:52.9px" width="29" height="29" viewBox="0 0 29 29"><rect x="7" y="7" width="16.2" height="15.6" fill="#dadada"/><text x="15.1" y="18.3" text-anchor="middle" font-family="Liberation Sans" font-weight="bold" font-size="10" fill="#000" stroke="#000" stroke-width="0.45">;A;</text></svg>
<div class="b" style="left:67.1px;top:52.9px;width:28.8px;height:28.8px;background:#e9e9e9;border-top:2px solid #808080;border-left:2px solid #808080;border-right:1.5px solid #fdfdfd;border-bottom:1.5px solid #fdfdfd;"></div><div class="b" style="left:70.0px;top:56.1px;width:24.3px;height:23.8px;background:#e1e1e1;border:1px solid #a2a2a2;"></div><svg style="left:67.1px;top:52.9px" width="29" height="29" viewBox="0 0 29 29"><rect x="8" y="7" width="15" height="15.5" fill="#e8e8e8"/><path d="M8.6 8.2L21.6 20.8M21.6 8.2L8.6 20.8" stroke="#ff0000" stroke-width="2"/></svg>
<div class="b" style="left:3px;top:85px;width:169px;height:227px;background:#fff;border:1px solid #828790;"></div>
<div class="b" style="left:174px;top:85px;width:507px;height:227px;background:#fff;border:1px solid #828790;"></div>
<div class="b" style="left:27.2px;top:87.4px;width:48.6px;height:17.6px;background:#f0f0f0;"></div>
<svg style="left:17.2px;top:102.4px" width="2" height="9"><path d="M0.5 0V9" stroke="#888" stroke-width="1" stroke-dasharray="1,1"/></svg>
<svg style="left:13.1px;top:93.0px" width="16" height="9" viewBox="0 0 16 9"><rect x="0.5" y="0.5" width="8" height="8" rx="1.2" fill="#fafafa" stroke="#909090"/><path d="M1.4 7.6H7.6" stroke="#d0d0d0" stroke-width="1"/><path d="M2.4 4.5H6.6M4.5 2.4V6.6" stroke="#2a3a8a" stroke-width="1"/><path d="M10 4.5H11M12 4.5H13" stroke="#888" stroke-width="1"/></svg>
<svg style="left:13.1px;top:111.1px" width="16" height="9" viewBox="0 0 16 9"><rect x="0.5" y="0.5" width="8" height="8" rx="1.2" fill="#fafafa" stroke="#909090"/><path d="M1.4 7.6H7.6" stroke="#d0d0d0" stroke-width="1"/><path d="M2.4 4.5H6.6M4.5 2.4V6.6" stroke="#2a3a8a" stroke-width="1"/><path d="M10 4.5H11M12 4.5H13" stroke="#888" stroke-width="1"/></svg>
<span class="t" style="left:29.00px;top:87.50px;height:17px;line-height:17px;font-size:12px;letter-spacing:-0.123px;color:#000;">Auswahl</span>
<span class="t" style="left:29.00px;top:105.50px;height:17px;line-height:17px;font-size:12px;letter-spacing:-0.161px;color:#000;">Gemarkung: Ostbevern</span>
<div class="b" style="left:206.4px;top:87px;width:1px;height:24px;background:#e5e5e5;"></div>
<div class="b" style="left:280.3px;top:87px;width:1px;height:24px;background:#e5e5e5;"></div>
<div class="b" style="left:312.4px;top:87px;width:1px;height:24px;background:#e5e5e5;"></div>
<div class="b" style="left:372.1px;top:87px;width:1px;height:24px;background:#e5e5e5;"></div>
<div class="b" style="left:493.9px;top:87px;width:1px;height:24px;background:#e5e5e5;"></div>
<div class="b" style="left:678.2px;top:87px;width:1px;height:24px;background:#e5e5e5;"></div>
<span class="t" style="left:182.00px;top:91.10px;height:17px;line-height:17px;font-size:12px;letter-spacing:-0.281px;color:#000;">Typ</span>
<span class="t" style="left:213.20px;top:91.10px;height:17px;line-height:17px;font-size:12px;letter-spacing:-0.189px;color:#000;">Gemarkung</span>
<span class="t" style="left:287.30px;top:91.10px;height:17px;line-height:17px;font-size:12px;letter-spacing:-0.292px;color:#000;">Flur</span>
<span class="t" style="left:319.50px;top:91.10px;height:17px;line-height:17px;font-size:12px;letter-spacing:0.249px;color:#000;">Nummer</span>
<div class="b" style="left:180px;top:111px;width:498.5px;height:19px;background:#0078d7;outline:1px dotted #f0b070;outline-offset:-1px;"></div>
<span class="t" style="left:182.00px;top:113.10px;height:17px;line-height:17px;font-size:12px;letter-spacing:-0.133px;color:#fff;">Flst.</span>
<span class="t" style="left:235.60px;top:113.10px;height:17px;line-height:17px;font-size:12px;letter-spacing:-0.474px;color:#fff;">05</span>
<span class="t" style="left:252.20px;top:113.10px;height:17px;line-height:17px;font-size:12px;letter-spacing:-1.074px;color:#fff;">5044</span>
<span class="t" style="left:295.00px;top:113.10px;height:17px;line-height:17px;font-size:12px;letter-spacing:-0.574px;color:#fff;">24</span>
<span class="t" style="left:349.30px;top:113.10px;height:17px;line-height:17px;font-size:12px;letter-spacing:-0.741px;color:#fff;">824</span>
<span class="t" style="left:379.30px;top:113.10px;height:17px;line-height:17px;font-size:12px;letter-spacing:-0.754px;color:#fff;">DENW54AL0000S7UT</span>
</div>
<div class="b" style="left:1064px;top:616px;width:413px;height:49.8px;background:#f2f2f2;border:1px solid #d2d2d2;box-shadow:1px 2px 3px rgba(0,0,0,0.5);"></div>
<span class="t" style="left:1099.00px;top:622.30px;height:17px;line-height:17px;font-size:12px;letter-spacing:-0.228px;color:#000;">Flächenberechnungsansatz erzeugen ...</span>
<span class="t" style="left:1099.00px;top:644.10px;height:17px;line-height:17px;font-size:12px;letter-spacing:-0.178px;color:#000;">Flächenberechnungsansatz nur über Grenzpunkte erzeugen ...</span>
<div class="b" style="left:52px;top:767px;width:18.6px;height:269px;background:#f1f1f1;"></div>
<div class="b" style="left:52px;top:767px;width:781px;height:3.6px;background:#f4f4f4;"></div>
<div class="b" style="left:73px;top:767px;width:75px;height:3.8px;background:#ececec;"></div>
<div class="b" style="left:265px;top:767px;width:568px;height:4.6px;background:#ececec;"></div>
<div class="b" style="left:77.8px;top:767px;width:16.4px;height:1.2px;background:#1414f0;"></div>
<div class="b" style="left:52.2px;top:770px;width:0.8px;height:266px;background:#e4e4e4;"></div>
<div class="b" style="left:54.3px;top:776px;width:1.6px;height:260px;background:#747474;"></div>
<div class="b" style="left:53.6px;top:776px;width:0.8px;height:260px;background:#fafafa;"></div>
<div class="b" style="left:60.2px;top:767px;width:1.9px;height:269px;background:#6a6a6a;"></div>
<div class="b" style="left:70.4px;top:767px;width:0.9px;height:269px;background:#dadada;"></div>
<div class="b" style="left:71.3px;top:770.6px;width:2.8px;height:265.4px;background:#fff;"></div>
<div class="b" style="left:74px;top:772.2px;width:759px;height:1px;background:#8c8c8c;"></div>
<div class="b" style="left:74px;top:773px;width:759px;height:1.2px;background:#585858;"></div>
<div class="b" style="left:74px;top:772.6px;width:1.8px;height:263.4px;background:#6e6e6e;"></div>
<div class="b" style="left:75.8px;top:774px;width:27.2px;height:262px;background:#c878c8;"></div>
<div class="b" style="left:102.9px;top:773px;width:1.2px;height:263px;background:#0a0a0a;"></div>
<div class="b" style="left:117.3px;top:774px;width:0.8px;height:262px;background:#e9e9e9;"></div>
<div class="b" style="left:118.5px;top:774px;width:69px;height:14px;background:#f4f4f4;"></div>
<div class="b" style="left:187.5px;top:774px;width:645.5px;height:14px;background:#eeeeee;"></div>
<div class="b" style="left:187.2px;top:788px;width:0.9px;height:248px;background:#e6e6e6;"></div>
<svg style="left:76.2px;top:773.9px" width="14" height="15" viewBox="0 0 14 15"><rect x="0" y="0" width="13.7" height="14.1" fill="#1e3ec2"/><rect x="1.5" y="1.6" width="10.7" height="10.9" fill="none" stroke="#fff" stroke-width="1"/><path d="M3.6 10.6V4.4L6.85 6.9L10.1 4.4V10.6" fill="none" stroke="#fff" stroke-width="1.15" stroke-linejoin="miter"/></svg>
<svg style="left:76.2px;top:802px" width="14" height="15" viewBox="0 0 14 15"><rect x="0" y="0" width="13.7" height="14.1" fill="#1e3ec2"/><rect x="1.5" y="1.6" width="10.7" height="10.9" fill="none" stroke="#fff" stroke-width="1"/><path d="M3.6 10.6V4.4L6.85 6.9L10.1 4.4V10.6" fill="none" stroke="#fff" stroke-width="1.15" stroke-linejoin="miter"/></svg>
<div class="b" style="left:188px;top:830px;width:55.2px;height:98px;background:#eeeefa;"></div>
<div class="b" style="left:250px;top:844px;width:63.2px;height:84px;background:#eeeefa;"></div>
<div class="b" style="left:446px;top:844px;width:63px;height:84px;background:#eeeefa;"></div>
<div class="b" style="left:515.6px;top:844px;width:7.6px;height:84px;background:#eeeefa;"></div>
<div class="b" style="left:188.2px;top:788.4px;width:1.8px;height:13px;background:#000;"></div>
<span class="t" style="left:293.50px;top:774.70px;height:14px;line-height:14px;font-size:11.667px;color:#262626;font-family:'Liberation Mono',monospace;">DOKUMENTENPARAMETER</span>
<span class="t" style="left:188.50px;top:802.70px;height:14px;line-height:14px;font-size:11.667px;color:#262626;font-family:'Liberation Mono',monospace;">Ber.–Nr.    *  FLÄCHENBERECHNUNG</span>
<span class="t" style="left:188.50px;top:816.70px;height:14px;line-height:14px;font-size:11.667px;color:#262626;font-family:'Liberation Mono',monospace;">PUNKT–NR  STR.–GEM  STR.–BER   DIFF     RADIUS        RECHTS–Y       HOCH–X</span>
<span class="t" style="left:188.50px;top:830.70px;height:14px;line-height:14px;font-size:11.667px;color:#262626;font-family:'Liberation Mono',monospace;"> 7002609</span>
<span class="t" style="left:188.50px;top:844.70px;height:14px;line-height:14px;font-size:11.667px;color:#262626;font-family:'Liberation Mono',monospace;"> 7002413         *                           * *</span>
<span class="t" style="left:188.50px;top:858.70px;height:14px;line-height:14px;font-size:11.667px;color:#262626;font-family:'Liberation Mono',monospace;"> 7002263         *                           * *</span>
<span class="t" style="left:188.50px;top:872.70px;height:14px;line-height:14px;font-size:11.667px;color:#262626;font-family:'Liberation Mono',monospace;"> 7002264         *                           * *</span>
<span class="t" style="left:188.50px;top:886.70px;height:14px;line-height:14px;font-size:11.667px;color:#262626;font-family:'Liberation Mono',monospace;"> 7002640         *                       2.995 2</span>
<span class="t" style="left:188.50px;top:900.70px;height:14px;line-height:14px;font-size:11.667px;color:#262626;font-family:'Liberation Mono',monospace;"> 7002606         *                       3.000 2</span>
<span class="t" style="left:188.50px;top:914.70px;height:14px;line-height:14px;font-size:11.667px;color:#262626;font-family:'Liberation Mono',monospace;"> 7002609         *                           * *</span>
<span class="t" style="left:188.50px;top:928.70px;height:14px;line-height:14px;font-size:11.667px;color:#262626;font-family:'Liberation Mono',monospace;">FLÄCHE =          *  REDUZIERT =          *</span>
<span class="t" style="left:188.50px;top:942.70px;height:14px;line-height:14px;font-size:11.667px;color:#262626;font-family:'Liberation Mono',monospace;">                  AMTL.–FLÄCHE =    508.000</span>
<div class="b" style="left:118.5px;top:968.7px;width:651px;height:1.1px;background:repeating-linear-gradient(90deg,#222 0,#222 5.6px,#fff 5.6px,#fff 7px);"></div>
<div class="b" style="left:769.4px;top:870px;width:2.6px;height:193px;background:#c070c8;"></div>
<div class="b" style="left:772px;top:870px;width:1.2px;height:193px;background:#111;"></div>
<div class="b" style="left:786.4px;top:870px;width:1px;height:193px;background:#e4e4e4;"></div>
<div class="b" style="left:855.8px;top:870px;width:1px;height:193px;background:#e2e2e2;"></div>
<div class="b" style="left:856.8px;top:925px;width:55.6px;height:98px;background:#eeeefa;"></div>
<div class="b" style="left:919px;top:939px;width:63.2px;height:84px;background:#eeeefa;"></div>
<div class="b" style="left:989px;top:939px;width:63.2px;height:84px;background:#eeeefa;"></div>
<div class="b" style="left:1115px;top:939px;width:63.4px;height:84px;background:#eeeefa;"></div>
<div class="b" style="left:1184.6px;top:939px;width:7.6px;height:84px;background:#eeeefa;"></div>
<div class="b" style="left:857.2px;top:870.4px;width:2px;height:11.8px;background:#000;"></div>
<span class="t" style="left:857.50px;top:883.70px;height:14px;line-height:14px;font-size:11.667px;color:#262626;font-family:'Liberation Mono',monospace;">Ber.–Nr.   15  FLÄCHENBERECHNUNG</span>
<span class="t" style="left:857.50px;top:897.70px;height:14px;line-height:14px;font-size:11.667px;color:#2f6ca3;font-family:'Liberation Mono',monospace;">ALTES FLURSTÜCK: 05504402400824______</span>
<span class="t" style="left:857.50px;top:911.70px;height:14px;line-height:14px;font-size:11.667px;color:#262626;font-family:'Liberation Mono',monospace;">PUNKT–NR  STR.–GEM  STR.–BER   DIFF     RADIUS        RECHTS–Y       HOCH–X</span>
<span class="t" style="left:857.50px;top:925.70px;height:14px;line-height:14px;font-size:11.667px;color:#262626;font-family:'Liberation Mono',monospace;"> 7002609                                           2420158.839  5767139.426</span>
<span class="t" style="left:857.50px;top:939.70px;height:14px;line-height:14px;font-size:11.667px;color:#262626;font-family:'Liberation Mono',monospace;"> 7002413         *    25.235                 * *   2420180.634  5767126.723</span>
<span class="t" style="left:857.50px;top:953.70px;height:14px;line-height:14px;font-size:11.667px;color:#262626;font-family:'Liberation Mono',monospace;"> 7002263         *    19.009                 * *   2420171.070  5767110.303</span>
<span class="t" style="left:857.50px;top:967.70px;height:14px;line-height:14px;font-size:11.667px;color:#262626;font-family:'Liberation Mono',monospace;"> 7002264         *    21.880                 * *   2420151.136  5767119.306</span>
<span class="t" style="left:857.50px;top:981.70px;height:14px;line-height:14px;font-size:11.667px;color:#262626;font-family:'Liberation Mono',monospace;"> 7002640         *     2.429             2.995 2   2420149.517  5767121.115</span>
<span class="t" style="left:857.50px;top:995.70px;height:14px;line-height:14px;font-size:11.667px;color:#262626;font-family:'Liberation Mono',monospace;"> 7002606         *     2.430             3.000 2   2420149.768  5767123.531</span>
<span class="t" style="left:857.50px;top:1009.70px;height:14px;line-height:14px;font-size:11.667px;color:#262626;font-family:'Liberation Mono',monospace;"> 7002609         *    18.307                 * *   2420158.839  5767139.426</span>
<span class="t" style="left:857.50px;top:1023.70px;height:14px;line-height:14px;font-size:11.667px;color:#262626;font-family:'Liberation Mono',monospace;">FLÄCHE =    507.951  REDUZIERT =          *</span>
<span class="t" style="left:857.50px;top:1037.70px;height:14px;line-height:14px;font-size:11.667px;color:#262626;font-family:'Liberation Mono',monospace;">                  AMTL.–FLÄCHE =    508.000</span>
<div class="b" style="left:78px;top:7px;width:44px;height:42px;border:2px solid #c00000;box-shadow:3px 3px 5px rgba(0,0,0,0.45);"></div>
<div class="b" style="left:101px;top:49px;width:108px;height:36px;background:#ffffe1;border:1px solid #000;box-shadow:2px 2px 3px rgba(0,0,0,0.6);"></div>
<span class="t" style="left:105.60px;top:52.20px;height:17px;line-height:17px;font-size:12px;letter-spacing:-0.374px;color:#000;font-weight:bold;">KAVDI:</span>
<span class="t" style="left:105.60px;top:67.30px;height:17px;line-height:17px;font-size:12px;letter-spacing:-0.520px;color:#000;font-weight:bold;">Flurstücksauswahl</span>
<svg style="left:111.2px;top:34.6px" width="30" height="40" viewBox="0 0 30 40"><g transform="translate(3,3.2) scale(1.3)" opacity="0.6" filter="url(#blur1)"><polygon points="0,0 0,16.6 3.9,13 6.7,19.2 9.1,18.2 6.4,12.1 11.7,12.1" fill="#000"/></g><g transform="scale(1.3)"><polygon points="0,0 0,16.6 3.9,13 6.7,19.2 9.1,18.2 6.4,12.1 11.7,12.1" fill="url(#cgrad)" stroke="#0a0a0a" stroke-width="0.95" stroke-linejoin="miter"/></g></svg>
<svg style="left:0;top:0" width="1508" height="1081"><defs><clipPath id="bc648"><path d="M653.8,158.4 H731.8 Q736.8,158.4 736.8,163.4 V183.6 Q736.8,188.6 731.8,188.6 H693.5 L697.6,196.6 L681,188.6 H653.8 Q648.8,188.6 648.8,183.6 V163.4 Q648.8,158.4 653.8,158.4 Z"/></clipPath></defs><path d="M653.8,158.4 H731.8 Q736.8,158.4 736.8,163.4 V183.6 Q736.8,188.6 731.8,188.6 H693.5 L697.6,196.6 L681,188.6 H653.8 Q648.8,188.6 648.8,183.6 V163.4 Q648.8,158.4 653.8,158.4 Z" fill="#000" opacity="0.55" transform="translate(4,4.5)" filter="url(#blur2)"/><path d="M653.8,158.4 H731.8 Q736.8,158.4 736.8,163.4 V183.6 Q736.8,188.6 731.8,188.6 H693.5 L697.6,196.6 L681,188.6 H653.8 Q648.8,188.6 648.8,183.6 V163.4 Q648.8,158.4 653.8,158.4 Z" fill="#fff"/><g clip-path="url(#bc648)"><path d="M653.8,158.4 H731.8 Q736.8,158.4 736.8,163.4 V183.6 Q736.8,188.6 731.8,188.6 H693.5 L697.6,196.6 L681,188.6 H653.8 Q648.8,188.6 648.8,183.6 V163.4 Q648.8,158.4 653.8,158.4 Z" fill="none" stroke="#f62a2a" stroke-width="4.6" filter="url(#blur09)"/></g><path d="M653.8,158.4 H731.8 Q736.8,158.4 736.8,163.4 V183.6 Q736.8,188.6 731.8,188.6 H693.5 L697.6,196.6 L681,188.6 H653.8 Q648.8,188.6 648.8,183.6 V163.4 Q648.8,158.4 653.8,158.4 Z" fill="none" stroke="#c00000" stroke-width="1.3"/></svg><span class="t" style="left:653.65px;top:165.90px;height:16px;line-height:16px;font-size:11.5px;letter-spacing:0.369px;color:#000;font-weight:bold;">Rechter Klick</span>
<svg style="left:693.4px;top:197px" width="30" height="40" viewBox="0 0 30 40"><g transform="translate(3,3.2) scale(1.22)" opacity="0.6" filter="url(#blur1)"><polygon points="0,0 0,16.6 3.9,13 6.7,19.2 9.1,18.2 6.4,12.1 11.7,12.1" fill="#000"/></g><g transform="scale(1.22)"><polygon points="0,0 0,16.6 3.9,13 6.7,19.2 9.1,18.2 6.4,12.1 11.7,12.1" fill="url(#cgrad)" stroke="#0a0a0a" stroke-width="0.95" stroke-linejoin="miter"/></g></svg>
<svg style="left:0;top:0" width="1508" height="1081"><defs><clipPath id="bc913"><path d="M918.7,412.8 H996.7 Q1001.7,412.8 1001.7,417.8 V438.2 Q1001.7,443.2 996.7,443.2 H957.5 L962,452.2 L945.5,443.2 H918.7 Q913.7,443.2 913.7,438.2 V417.8 Q913.7,412.8 918.7,412.8 Z"/></clipPath></defs><path d="M918.7,412.8 H996.7 Q1001.7,412.8 1001.7,417.8 V438.2 Q1001.7,443.2 996.7,443.2 H957.5 L962,452.2 L945.5,443.2 H918.7 Q913.7,443.2 913.7,438.2 V417.8 Q913.7,412.8 918.7,412.8 Z" fill="#000" opacity="0.55" transform="translate(4,4.5)" filter="url(#blur2)"/><path d="M918.7,412.8 H996.7 Q1001.7,412.8 1001.7,417.8 V438.2 Q1001.7,443.2 996.7,443.2 H957.5 L962,452.2 L945.5,443.2 H918.7 Q913.7,443.2 913.7,438.2 V417.8 Q913.7,412.8 918.7,412.8 Z" fill="#fff"/><g clip-path="url(#bc913)"><path d="M918.7,412.8 H996.7 Q1001.7,412.8 1001.7,417.8 V438.2 Q1001.7,443.2 996.7,443.2 H957.5 L962,452.2 L945.5,443.2 H918.7 Q913.7,443.2 913.7,438.2 V417.8 Q913.7,412.8 918.7,412.8 Z" fill="none" stroke="#f62a2a" stroke-width="4.6" filter="url(#blur09)"/></g><path d="M918.7,412.8 H996.7 Q1001.7,412.8 1001.7,417.8 V438.2 Q1001.7,443.2 996.7,443.2 H957.5 L962,452.2 L945.5,443.2 H918.7 Q913.7,443.2 913.7,438.2 V417.8 Q913.7,412.8 918.7,412.8 Z" fill="none" stroke="#c00000" stroke-width="1.3"/></svg><span class="t" style="left:918.50px;top:420.40px;height:16px;line-height:16px;font-size:11.5px;letter-spacing:0.377px;color:#000;font-weight:bold;">Rechter Klick</span>
<svg style="left:958.2px;top:452.8px" width="30" height="40" viewBox="0 0 30 40"><g transform="translate(3,3.2) scale(1.22)" opacity="0.6" filter="url(#blur1)"><polygon points="0,0 0,16.6 3.9,13 6.7,19.2 9.1,18.2 6.4,12.1 11.7,12.1" fill="#000"/></g><g transform="scale(1.22)"><polygon points="0,0 0,16.6 3.9,13 6.7,19.2 9.1,18.2 6.4,12.1 11.7,12.1" fill="url(#cgrad)" stroke="#0a0a0a" stroke-width="0.95" stroke-linejoin="miter"/></g></svg>
<svg style="left:1257px;top:634.4px" width="30" height="40" viewBox="0 0 30 40"><g transform="translate(3,3.2) scale(1.3)" opacity="0.6" filter="url(#blur1)"><polygon points="0,0 0,16.6 3.9,13 6.7,19.2 9.1,18.2 6.4,12.1 11.7,12.1" fill="#000"/></g><g transform="scale(1.3)"><polygon points="0,0 0,16.6 3.9,13 6.7,19.2 9.1,18.2 6.4,12.1 11.7,12.1" fill="url(#cgrad)" stroke="#0a0a0a" stroke-width="0.95" stroke-linejoin="miter"/></g></svg>
</body></html>
